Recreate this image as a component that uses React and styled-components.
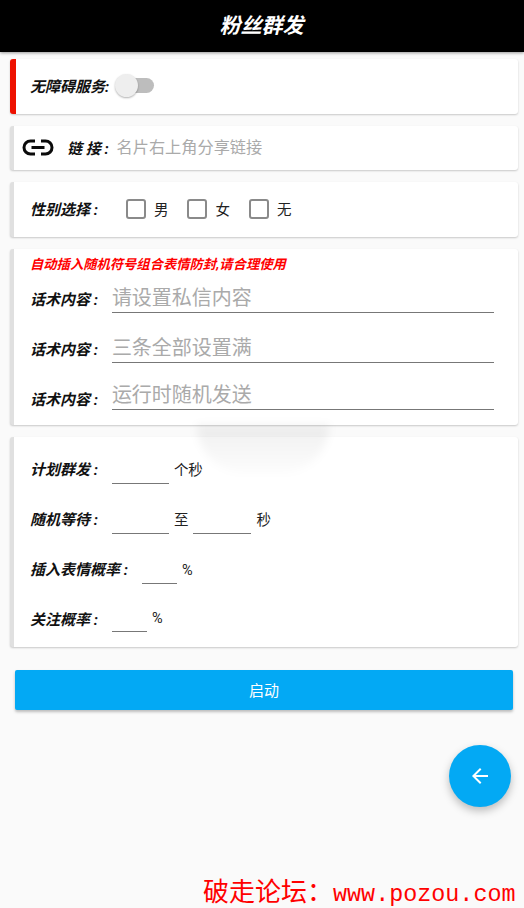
import React from "react";
import styled, { createGlobalStyle } from "styled-components";

const FONT = `Roboto, "Noto Sans CJK SC", sans-serif`;

const GlobalStyle = createGlobalStyle`
  html, body {
    margin: 0;
    padding: 0;
    background: #fafafa;
  }
  * {
    box-sizing: border-box;
  }
`;

const App = () => {
  return (
    <Page>
      <GlobalStyle />
      <Header>粉丝群发</Header>
      <Main>
        <Card $accent="#ee1100" $height={55}>
          <Label>无障碍服务:</Label>
          <Switch>
            <SwitchTrack />
            <SwitchThumb />
          </Switch>
        </Card>

        <LinkCard $height={44}>
          <svg width="32" height="17" viewBox="0 0 32 17" fill="none">
            <path
              d="M13 2H8.500a6.500 6.500 0 0 0 0 13H13M19 2h4.500a6.500 6.500 0 0 1 0 13H19M9.500 8.500h13"
              stroke="#0b0b0b"
              strokeWidth="3"
            />
          </svg>
          <LinkLabel>链 接 :</LinkLabel>
          <LinkHint>名片右上角分享链接</LinkHint>
        </LinkCard>

        <Card $height={55}>
          <Label>性别选择 :</Label>
          <GenderGroup>
            {["男", "女", "无"].map((g) => (
              <GenderOption key={g}>
                <CheckBox />
                <span>{g}</span>
              </GenderOption>
            ))}
          </GenderGroup>
        </Card>

        <ScriptCard>
          <Warning>自动插入随机符号组合表情防封,请合理使用</Warning>
          <ScriptRow $height={37} $lift={4}>
            <Label>话术内容 :</Label>
            <ScriptInput>请设置私信内容</ScriptInput>
          </ScriptRow>
          <ScriptRow $height={50} $lift={4}>
            <Label>话术内容 :</Label>
            <ScriptInput>三条全部设置满</ScriptInput>
          </ScriptRow>
          <ScriptRow $height={47} $lift={1}>
            <Label>话术内容 :</Label>
            <ScriptInput>运行时随机发送</ScriptInput>
          </ScriptRow>
        </ScriptCard>

        <PlanCard>
          <Ripple />
          <PlanRow>
            <Label>计划群发 :</Label>
            <BlankLine $width={57} />
            <Unit>个秒</Unit>
          </PlanRow>
          <PlanRow>
            <Label>随机等待 :</Label>
            <BlankLine $width={57} />
            <Unit>至</Unit>
            <BlankLine $width={58} />
            <Unit>秒</Unit>
          </PlanRow>
          <PlanRow>
            <Label>插入表情概率 :</Label>
            <BlankLine $width={35} />
            <Unit>%</Unit>
          </PlanRow>
          <PlanRow $height={48}>
            <Label>关注概率 :</Label>
            <BlankLine $width={35} />
            <Unit>%</Unit>
          </PlanRow>
        </PlanCard>

        <StartButton>启动</StartButton>
      </Main>

      <Fab>
        <svg width="24" height="24" viewBox="0 0 24 24" fill="#fff">
          <path d="M20 11H7.830l5.590-5.590L12 4l-8 8 8 8 1.410-1.410L7.830 13H20v-2z" />
        </svg>
      </Fab>

      <Watermark>
        破走论坛：<WatermarkUrl>www.pozou.com</WatermarkUrl>
      </Watermark>
    </Page>
  );
};

const Page = styled.div`
  position: relative;
  width: 524px;
  height: 908px;
  overflow: hidden;
  background: #fafafa;
  font-family: ${FONT};
  color: #111;
`;

const Header = styled.div`
  position: relative;
  z-index: 2;
  height: 52px;
  padding-right: 1px;
  background: #000;
  color: #fff;
  font-size: 21px;
  font-weight: bold;
  font-style: italic;
  line-height: 52px;
  text-align: center;
  box-shadow: 0 1px 3px rgba(0, 0, 0, 0.4);
`;

const Main = styled.div`
  display: flex;
  flex-direction: column;
  gap: 12px;
  padding: 7px 6px 0 10px;
`;

const Card = styled.div`
  position: relative;
  display: flex;
  align-items: center;
  height: ${(p) => p.$height}px;
  padding-left: ${(p) => (p.$accent ? 14 : 16)}px;
  padding-bottom: 2px;
  background: #fff;
  border-left: ${(p) => (p.$accent ? 6 : 4)}px solid ${(p) => p.$accent || "#e0e0e0"};
  border-radius: 3px;
  box-shadow: 0 1px 2px rgba(0, 0, 0, 0.2);
`;

const Label = styled.span`
  flex: none;
  margin-right: 14px;
  font-size: 15px;
  font-weight: bold;
  font-style: italic;
  white-space: nowrap;
  color: #111;
`;

const Switch = styled.div`
  position: relative;
  width: 39px;
  height: 23px;
  margin-left: -8px;
`;

const SwitchTrack = styled.div`
  position: absolute;
  left: 4px;
  top: 4px;
  width: 35px;
  height: 15px;
  border-radius: 8px;
  background: #bdbdbd;
`;

const SwitchThumb = styled.div`
  position: absolute;
  left: 0;
  top: 0;
  width: 23px;
  height: 23px;
  border-radius: 50%;
  background: #eeeeee;
  box-shadow: 0 1px 2px rgba(0, 0, 0, 0.3);
`;

const LinkCard = styled(Card)`
  padding-left: 8px;
`;

const LinkLabel = styled(Label)`
  margin-left: 13px;
  margin-right: 8px;
`;

const LinkHint = styled.span`
  margin-bottom: 2px;
  font-size: 16.2px;
  color: #aaa;
  white-space: nowrap;
`;

const GenderGroup = styled.div`
  display: flex;
  gap: 19px;
  margin-left: 14px;
`;

const GenderOption = styled.div`
  display: flex;
  align-items: center;
  gap: 8px;
  font-size: 14.5px;
  color: #222;
`;

const CheckBox = styled.div`
  width: 20px;
  height: 20px;
  border: 2px solid #8a8a8a;
  border-radius: 3px;
`;

const ScriptCard = styled(Card)`
  display: block;
  height: 176px;
  padding: 8px 24px 0 16px;
`;

const Warning = styled.div`
  height: 19px;
  font-size: 13.3px;
  font-weight: bold;
  font-style: italic;
  line-height: 16px;
  color: #ff0000;
  white-space: nowrap;
`;

const ScriptRow = styled.div`
  display: flex;
  align-items: flex-end;
  height: ${(p) => p.$height}px;
  & > ${Label} {
    margin-bottom: ${(p) => p.$lift}px;
  }
`;

const ScriptInput = styled.div`
  flex: 1;
  height: 34px;
  border-bottom: 1px solid #777;
  font-size: 20px;
  line-height: 38px;
  color: #aaa;
  white-space: nowrap;
`;

const PlanCard = styled(Card)`
  display: block;
  height: 210px;
  padding-bottom: 0;
`;

const PlanRow = styled.div`
  display: flex;
  align-items: flex-end;
  height: ${(p) => p.$height || 50}px;
  padding-bottom: 3px;
  & > ${Label} {
    margin-bottom: ${(p) => (p.$height ? 3 : 5)}px;
  }
`;

const BlankLine = styled.div`
  width: ${(p) => p.$width}px;
  height: 30px;
  border-bottom: 1px solid #777;
`;

const Unit = styled.span`
  margin: 0 5px 5px 5px;
  font-size: 14.5px;
  color: #222;
`;

const Ripple = styled.div`
  position: absolute;
  left: 183px;
  top: -12px;
  width: 132px;
  height: 48px;
  border-radius: 0 0 66px 66px;
  background: linear-gradient(rgba(0, 0, 0, 0.06), rgba(0, 0, 0, 0.01));
  filter: blur(4px);
  pointer-events: none;
`;

const StartButton = styled.button`
  width: 498px;
  height: 40px;
  margin: 11px 0 0 5px;
  padding: 0 0 2px;
  border: none;
  border-radius: 2px;
  background: #03a9f4;
  color: #fff;
  font-family: ${FONT};
  font-size: 15px;
  box-shadow: 0 2px 3px rgba(0, 0, 0, 0.25);
`;

const Fab = styled.div`
  position: absolute;
  left: 449px;
  top: 745px;
  display: flex;
  align-items: center;
  justify-content: center;
  width: 62px;
  height: 62px;
  border-radius: 50%;
  background: #03a9f4;
  box-shadow: 0 4px 8px rgba(0, 0, 0, 0.25);
`;

const Watermark = styled.div`
  position: absolute;
  left: 203px;
  top: 875px;
  font-family: "Noto Sans CJK SC", serif;
  font-size: 26px;
  line-height: 30px;
  color: #ff0000;
  white-space: nowrap;
`;

const WatermarkUrl = styled.span`
  font-family: "Liberation Mono", monospace;
  font-size: 23.4px;
`;

export default App;
